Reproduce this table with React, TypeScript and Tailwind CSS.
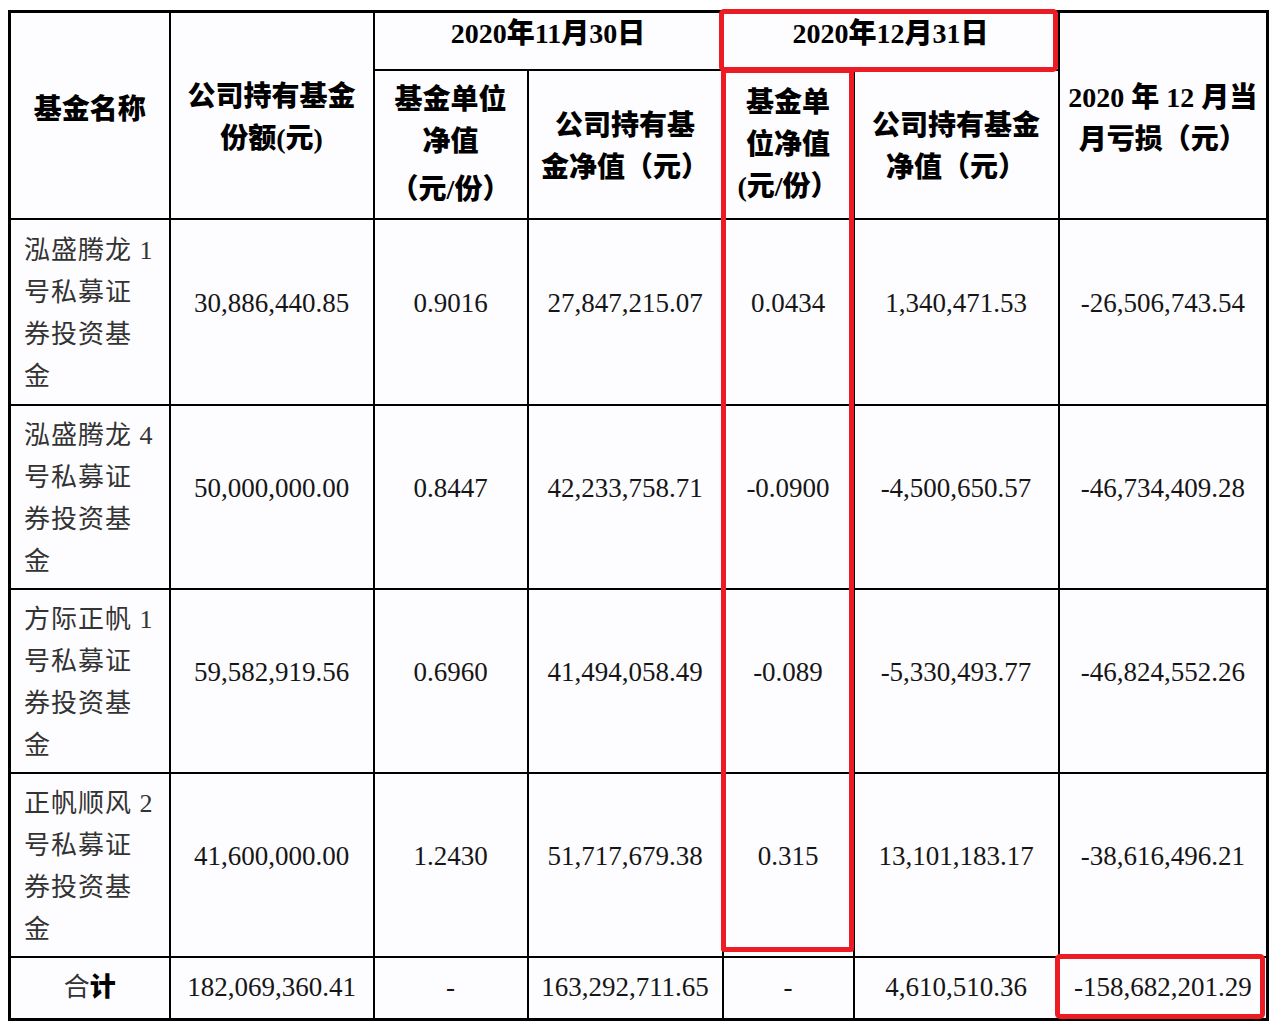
const serif = "font-['Liberation_Serif','Noto_Sans_CJK_SC',serif]";

interface FundRow {
  name: string[];
  shares: string;
  novNav: string;
  novValue: string;
  decNav: string;
  decValue: string;
  loss: string;
}

const rows: FundRow[] = [
  {
    name: ["泓盛腾龙 1", "号私募证", "券投资基", "金"],
    shares: "30,886,440.85",
    novNav: "0.9016",
    novValue: "27,847,215.07",
    decNav: "0.0434",
    decValue: "1,340,471.53",
    loss: "-26,506,743.54",
  },
  {
    name: ["泓盛腾龙 4", "号私募证", "券投资基", "金"],
    shares: "50,000,000.00",
    novNav: "0.8447",
    novValue: "42,233,758.71",
    decNav: "-0.0900",
    decValue: "-4,500,650.57",
    loss: "-46,734,409.28",
  },
  {
    name: ["方际正帆 1", "号私募证", "券投资基", "金"],
    shares: "59,582,919.56",
    novNav: "0.6960",
    novValue: "41,494,058.49",
    decNav: "-0.089",
    decValue: "-5,330,493.77",
    loss: "-46,824,552.26",
  },
  {
    name: ["正帆顺风 2", "号私募证", "券投资基", "金"],
    shares: "41,600,000.00",
    novNav: "1.2430",
    novValue: "51,717,679.38",
    decNav: "0.315",
    decValue: "13,101,183.17",
    loss: "-38,616,496.21",
  },
];

const th = "border-2 border-black text-center align-middle font-black text-[28px] leading-[42px] text-black";
const td = "border-2 border-black text-center align-middle text-[27px] text-[#161616] pb-[18px]";
const tdTotal = "border-2 border-black text-center align-middle text-[27px] text-[#161616] pb-[2px]";

function Lines({ items }: { items: string[] }) {
  return (
    <>
      {items.map((t) => (
        <span key={t} className="block whitespace-nowrap">
          {t}
        </span>
      ))}
    </>
  );
}

export default function App() {
  return (
    <div className={`min-h-[1026px] bg-white pl-[8px] pt-[10px] ${serif}`}>
      <div className="relative w-[1258px]">
        <table className="w-[1258px] table-fixed border-collapse border-[3px] border-black bg-[#fdfcfe]">
          <colgroup>
            <col className="w-[160px]" />
            <col className="w-[204px]" />
            <col className="w-[154px]" />
            <col className="w-[195px]" />
            <col className="w-[131px]" />
            <col className="w-[205px]" />
            <col className="w-[209px]" />
          </colgroup>
          <thead>
            <tr className="h-[58px]">
              <th rowSpan={2} className={`${th} pb-[12px]`}>
                基金名称
              </th>
              <th rowSpan={2} className={`${th} pt-[4px]`}>
                <Lines items={["公司持有基金", "份额(元)"]} />
              </th>
              <th colSpan={2} className={`${th} text-[27px] pb-[14px]`}>
                2020年11月30日
              </th>
              <th colSpan={2} className={`${th} text-[27px] pb-[14px]`}>
                2020年12月31日
              </th>
              <th rowSpan={2} className={`${th} pt-[6px]`}>
                <Lines items={["2020 年 12 月当", "月亏损（元）"]} />
              </th>
            </tr>
            <tr className="h-[149px]">
              <th className={th}>
                <Lines items={["基金单位", "净值"]} />
                <span className="mt-[6px] block">（元/份）</span>
              </th>
              <th className={`${th} pt-[4px]`}>
                <Lines items={["公司持有基", "金净值（元）"]} />
              </th>
              <th className={th}>
                <Lines items={["基金单", "位净值", "(元/份）"]} />
              </th>
              <th className={`${th} pt-[4px]`}>
                <Lines items={["公司持有基金", "净值（元）"]} />
              </th>
            </tr>
          </thead>
          <tbody>
            {rows.map((r, i) => (
              <tr key={r.shares} className={i === 0 ? "h-[186px]" : "h-[184px]"}>
                <td className="border-2 border-black pl-[13px] pt-[4px] align-middle text-[26px] leading-[42px] tracking-[1px] text-[#333]">
                  <Lines items={r.name} />
                </td>
                <td className={td}>{r.shares}</td>
                <td className={td}>{r.novNav}</td>
                <td className={td}>{r.novValue}</td>
                <td className={td}>{r.decNav}</td>
                <td className={td}>{r.decValue}</td>
                <td className={td}>{r.loss}</td>
              </tr>
            ))}
            <tr className="h-[62px]">
              <td className="border-2 border-black text-center align-middle text-[26px] text-[#333]">
                合<span className="font-black text-black">计</span>
              </td>
              <td className={tdTotal}>182,069,360.41</td>
              <td className={tdTotal}>-</td>
              <td className={tdTotal}>163,292,711.65</td>
              <td className={tdTotal}>-</td>
              <td className={tdTotal}>4,610,510.36</td>
              <td className={tdTotal}>-158,682,201.29</td>
            </tr>
          </tbody>
        </table>

        {/* red annotation boxes drawn over the table */}
        <div className="pointer-events-none absolute left-[711px] top-[-1px] h-[63px] w-[339px] rounded-[5px] border-[5px] border-[#ec1c24]" />
        <div className="pointer-events-none absolute left-[713px] top-[58px] h-[884px] w-[133px] rounded-[3px] border-[5px] border-[#ec1c24]" />
        <div className="pointer-events-none absolute left-[1047px] top-[944px] h-[65px] w-[210px] rounded-[5px] border-[5px] border-[#ec1c24]" />
      </div>
    </div>
  );
}
